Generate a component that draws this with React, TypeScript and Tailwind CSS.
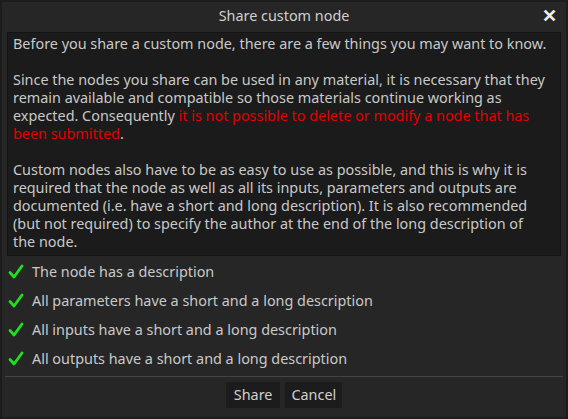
import React from "react";

function Check() {
  return (
    <svg width="16" height="16" viewBox="0 0 16 16" className="shrink-0">
      <path d="M2 8.5 L6 13 L14 2" fill="none" stroke="#1ee01e" strokeWidth="2.8" strokeLinecap="round" strokeLinejoin="round" />
    </svg>
  );
}

const items = [
  "The node has a description",
  "All parameters have a short and a long description",
  "All inputs have a short and a long description",
  "All outputs have a short and a long description",
];

export default function App() {
  return (
    <div
      className="w-[568px] h-[419px] bg-[#1c1c1c] p-[2px] text-[14.4px] text-[#c9c9c9]"
      style={{ fontFamily: '"Noto Sans", "Open Sans", sans-serif' }}
    >
      <div className="h-full flex flex-col bg-[#262626]">
        <div className="relative h-[28px] flex items-center justify-center">
          <span className="text-[#d0d0d0]">Share custom node</span>
          <span className="absolute right-[9px] top-[4px] text-[#eeeeee] text-[18px] leading-[18px] font-bold">✕</span>
        </div>
        <div className="mx-[5px] mt-[2px] h-[224px] bg-[#1b1b1b] border border-[#141414] pl-[5px] pr-[10px] py-[2px] leading-[18px]">
          <p>Before you share a custom node, there are a few things you may want to know.</p>
          <p className="mt-[18px]">
            Since the nodes you share can be used in any material, it is necessary that they remain available and
            compatible so those materials continue working as expected. Consequently{" "}
            <span className="text-[#e00000]">it is not possible to delete or modify a node that has been submitted</span>.
          </p>
          <p className="mt-[18px]">
            Custom nodes also have to be as easy to use as possible, and this is why it is required that the node as
            well as all its inputs, parameters and outputs are documented (i.e. have a short and long description). It is
            also recommended (but not required) to specify the author at the end of the long description of
            <br />
            the node.
          </p>
        </div>
        <div className="flex flex-col pl-[6px] mt-[1px]">
          {items.map((t) => (
            <div key={t} className="h-[29px] flex items-center gap-[8px]">
              <Check />
              <span>{t}</span>
            </div>
          ))}
        </div>
        <div className="mx-[3px] mt-[3px] h-px bg-[#444444]" />
        <div className="flex justify-center gap-[5px] mt-[5px]">
          <button className="h-[26px] px-[8px] bg-[#1c1c1c] text-[#d0d0d0]">Share</button>
          <button className="h-[26px] px-[6px] bg-[#1c1c1c] text-[#d0d0d0]">Cancel</button>
        </div>
      </div>
    </div>
  );
}
